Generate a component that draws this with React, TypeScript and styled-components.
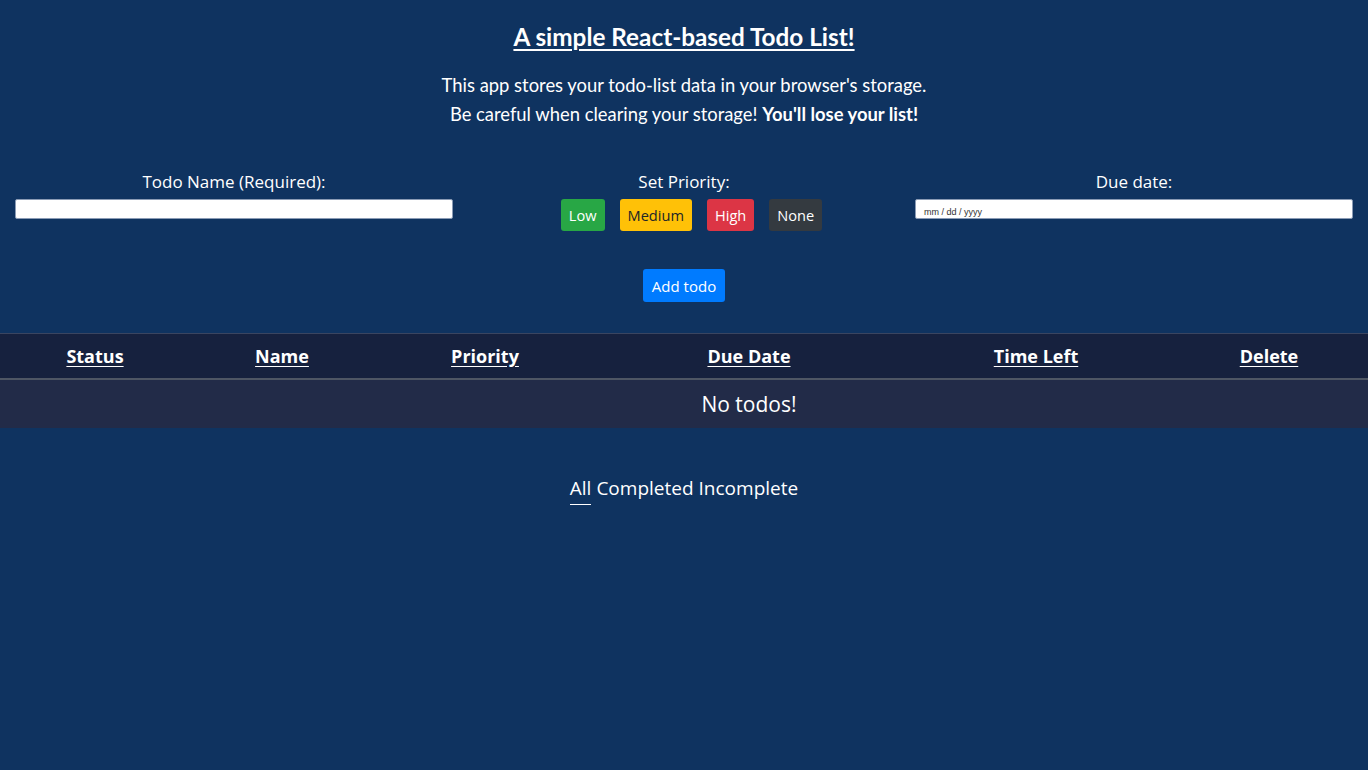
import React from "react";
import styled, { createGlobalStyle } from "styled-components";

const Global = createGlobalStyle`
  html, body { margin: 0; padding: 0; background: #0f3360; }
  body { font-family: "Open Sans", "Noto Sans", sans-serif; color: #ffffff; }
  * { box-sizing: border-box; }
`;

const Page = styled.div`
  min-height: 770px;
  background: #0f3360;
  display: flex;
  flex-direction: column;
  padding-top: 20px;
`;

const Intro = styled.header`
  display: flex;
  flex-direction: column;
  align-items: center;
  font-family: "Lato", sans-serif;
`;

const Title = styled.h1`
  margin: 0;
  font-size: 24.3px;
  font-weight: 700;
  text-decoration: underline;
  text-underline-offset: 3px;
  line-height: 34px;
`;

const Lead = styled.p`
  margin: 17px 0 0;
  font-size: 18.4px;
  line-height: 28.5px;
  text-align: center;
`;

const Form = styled.section`
  display: grid;
  grid-template-columns: 438px 1fr 438px;
  margin-top: 42px;
  padding: 0 15px;
`;

const Field = styled.div`
  display: flex;
  flex-direction: column;
  align-items: center;
`;

const Label = styled.label`
  font-size: 17px;
  line-height: 24px;
  margin-bottom: 5px;
`;

const TextInput = styled.input`
  width: 100%;
  height: 20px;
  border: 1px solid #8a9bb5;
  border-radius: 2px;
  background: #fff;
  padding: 0 8px;
  font-family: "Liberation Sans", sans-serif;
  font-size: 10px;
  color: #333;
`;

const DateBox = styled.div`
  width: 100%;
  height: 20px;
  border: 1px solid #8a9bb5;
  border-radius: 2px;
  background: #fff;
  padding: 0 8px;
  display: flex;
  align-items: flex-end;
  padding-bottom: 1px;
  font-family: "Liberation Sans", sans-serif;
  font-size: 9px;
  color: #333;
`;

const Priorities = styled.div`
  display: flex;
  gap: 15px;
  padding-left: 15px;
`;

const PriorityBtn = styled.button<{ $bg: string; $fg: string }>`
  height: 32px;
  padding: 0 8px;
  border: none;
  border-radius: 3px;
  background: ${(p) => p.$bg};
  color: ${(p) => p.$fg};
  font-family: "Open Sans", sans-serif;
  font-size: 14.6px;
  cursor: pointer;
`;

const AddRow = styled.div`
  display: flex;
  justify-content: center;
  margin-top: 38px;
`;

const AddBtn = styled.button`
  height: 33px;
  padding: 0 9px;
  border: none;
  border-radius: 3px;
  background: #007bff;
  color: #fff;
  font-family: "Open Sans", sans-serif;
  font-size: 15px;
`;

const Table = styled.table`
  margin-top: 31px;
  width: 100%;
  border-collapse: collapse;
  table-layout: fixed;
`;

const Th = styled.th`
  background: #16213e;
  border-top: 1px solid #3a4560;
  border-bottom: 2px solid #4e5664;
  height: 45px;
  font-family: "Open Sans", sans-serif;
  font-size: 18px;
  font-weight: 700;
  text-decoration: underline;
  text-underline-offset: 3px;
  padding: 0;
`;

const Td = styled.td`
  background: #222b48;
  height: 49px;
  text-align: center;
  font-size: 21px;
  padding: 0;
`;

const Filters = styled.nav`
  display: flex;
  justify-content: center;
  gap: 5px;
  margin-top: 48px;
  font-size: 19px;
`;

const FilterItem = styled.span<{ $active?: boolean }>`
  padding-bottom: 4px;
  border-bottom: 1px solid ${(p) => (p.$active ? "#ffffff" : "transparent")};
  line-height: 24px;
`;

const cols = [
  { name: "Status", w: 190 },
  { name: "Name", w: 184 },
  { name: "Priority", w: 222 },
  { name: "Due Date", w: 306 },
  { name: "Time Left", w: 268 },
  { name: "Delete", w: 198 },
];

export default function App() {
  return (
    <>
      <Global />
      <Page>
        <Intro>
          <Title>A simple React-based Todo List!</Title>
          <Lead>
            This app stores your todo-list data in your browser's storage.
            <br />
            Be careful when clearing your storage! <b>You'll lose your list!</b>
          </Lead>
        </Intro>
        <Form>
          <Field>
            <Label>Todo Name (Required):</Label>
            <TextInput type="text" />
          </Field>
          <Field>
            <Label>Set Priority:</Label>
            <Priorities>
              <PriorityBtn $bg="#28a745" $fg="#fff">Low</PriorityBtn>
              <PriorityBtn $bg="#ffc107" $fg="#212529">Medium</PriorityBtn>
              <PriorityBtn $bg="#dc3545" $fg="#fff">High</PriorityBtn>
              <PriorityBtn $bg="#343a40" $fg="#fff">None</PriorityBtn>
            </Priorities>
          </Field>
          <Field>
            <Label>Due date:</Label>
            <DateBox>mm / dd / yyyy</DateBox>
          </Field>
        </Form>
        <AddRow>
          <AddBtn>Add todo</AddBtn>
        </AddRow>
        <Table>
          <colgroup>
            {cols.map((c) => (
              <col key={c.name} style={{ width: c.w }} />
            ))}
          </colgroup>
          <thead>
            <tr>
              {cols.map((c) => (
                <Th key={c.name}>{c.name}</Th>
              ))}
            </tr>
          </thead>
          <tbody>
            <tr>
              <Td />
              <Td />
              <Td />
              <Td>No todos!</Td>
              <Td />
              <Td />
            </tr>
          </tbody>
        </Table>
        <Filters>
          <FilterItem $active>All</FilterItem>
          <FilterItem>Completed</FilterItem>
          <FilterItem>Incomplete</FilterItem>
        </Filters>
      </Page>
    </>
  );
}
